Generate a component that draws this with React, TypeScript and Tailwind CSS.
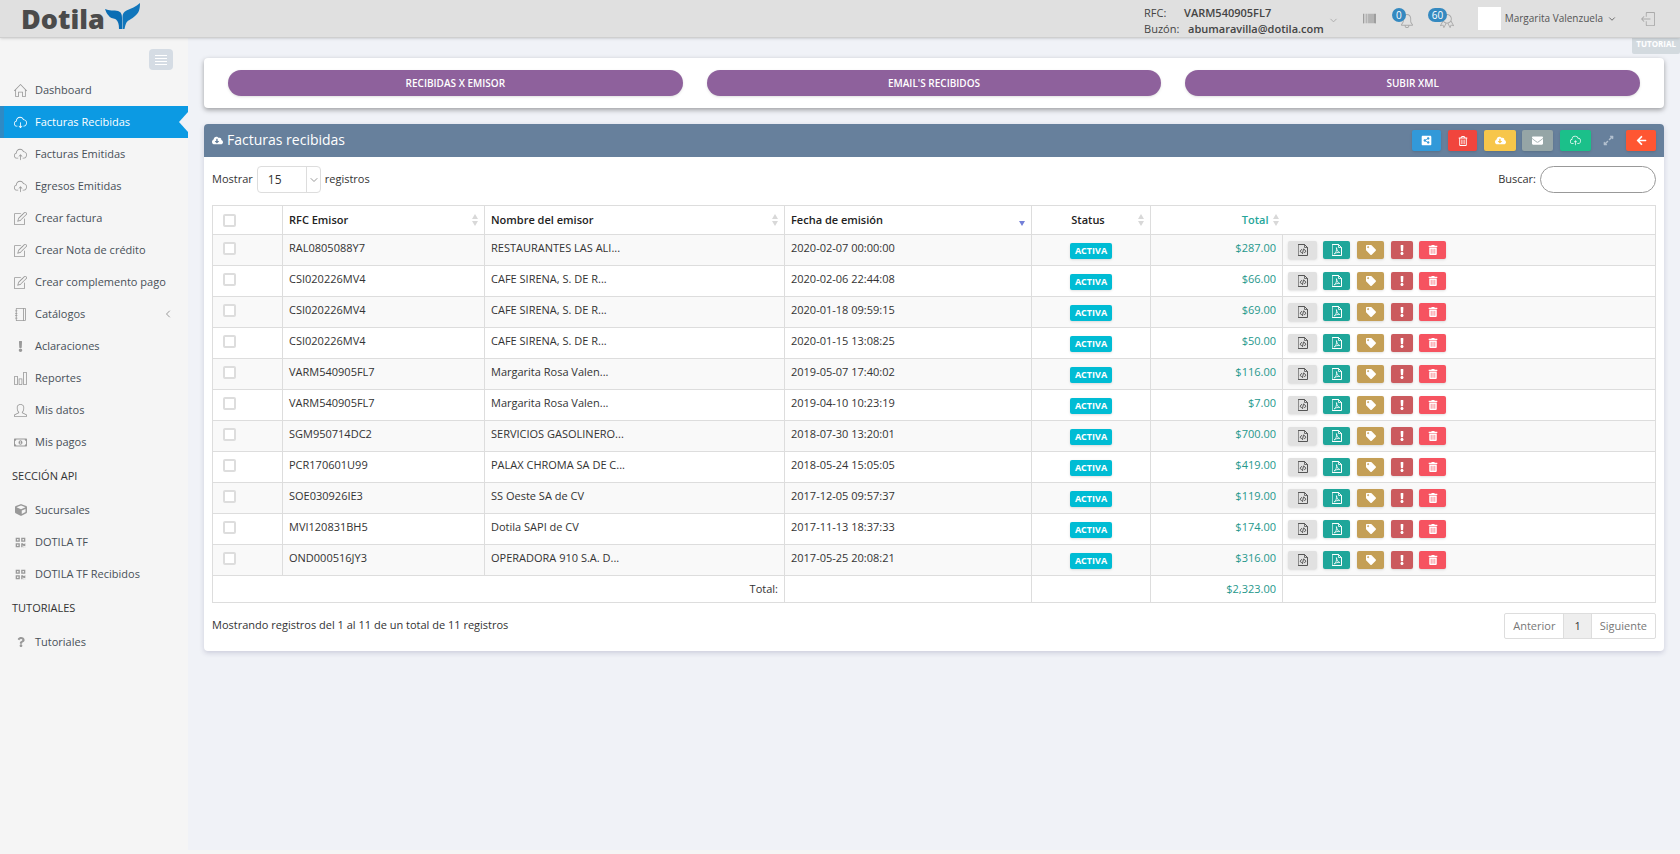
import { ReactNode } from "react";
import { FaArrowLeft, FaBarcode, FaCube, FaEnvelope, FaExclamation, FaCloudDownloadAlt, FaQrcode, FaQuestion, FaRegMoneyBillAlt, FaRegTrashAlt, FaShareAltSquare, FaTag, FaTrashAlt, FaExpandAlt } from "react-icons/fa";
import { SlBadge, SlBell, SlChart, SlCloudDownload, SlCloudUpload, SlHome, SlLogout, SlNote, SlNotebook, SlUser } from "react-icons/sl";
import { ChevronDown, ChevronLeft } from "lucide-react";

interface MenuItem {
    label: string;
    icon: ReactNode;
    active?: boolean;
    sub?: boolean;
}

interface Invoice {
    rfc: string;
    name: string;
    date: string;
    total: string;
}

const menu: MenuItem[] = [
    { label: "Dashboard", icon: <SlHome /> },
    { label: "Facturas Recibidas", icon: <SlCloudDownload />, active: true },
    { label: "Facturas Emitidas", icon: <SlCloudUpload /> },
    { label: "Egresos Emitidas", icon: <SlCloudUpload /> },
    { label: "Crear factura", icon: <SlNote /> },
    { label: "Crear Nota de crédito", icon: <SlNote /> },
    { label: "Crear complemento pago", icon: <SlNote /> },
    { label: "Catálogos", icon: <SlNotebook />, sub: true },
    { label: "Aclaraciones", icon: <FaExclamation size={11} /> },
    { label: "Reportes", icon: <SlChart /> },
    { label: "Mis datos", icon: <SlUser /> },
    { label: "Mis pagos", icon: <FaRegMoneyBillAlt /> },
];

const apiMenu: MenuItem[] = [
    { label: "Sucursales", icon: <FaCube size={12} /> },
    { label: "DOTILA TF", icon: <FaQrcode size={11} /> },
    { label: "DOTILA TF Recibidos", icon: <FaQrcode size={11} /> },
];

const tutorialMenu: MenuItem[] = [
    { label: "Tutoriales", icon: <FaQuestion size={10} /> },
];

const invoices: Invoice[] = [
    { rfc: "RAL0805088Y7", name: "RESTAURANTES LAS ALI...", date: "2020-02-07 00:00:00", total: "$287.00" },
    { rfc: "CSI020226MV4", name: "CAFE SIRENA, S. DE R...", date: "2020-02-06 22:44:08", total: "$66.00" },
    { rfc: "CSI020226MV4", name: "CAFE SIRENA, S. DE R...", date: "2020-01-18 09:59:15", total: "$69.00" },
    { rfc: "CSI020226MV4", name: "CAFE SIRENA, S. DE R...", date: "2020-01-15 13:08:25", total: "$50.00" },
    { rfc: "VARM540905FL7", name: "Margarita Rosa Valen...", date: "2019-05-07 17:40:02", total: "$116.00" },
    { rfc: "VARM540905FL7", name: "Margarita Rosa Valen...", date: "2019-04-10 10:23:19", total: "$7.00" },
    { rfc: "SGM950714DC2", name: "SERVICIOS GASOLINERO...", date: "2018-07-30 13:20:01", total: "$700.00" },
    { rfc: "PCR170601U99", name: "PALAX CHROMA SA DE C...", date: "2018-05-24 15:05:05", total: "$419.00" },
    { rfc: "SOE030926IE3", name: "SS Oeste SA de CV", date: "2017-12-05 09:57:37", total: "$119.00" },
    { rfc: "MVI120831BH5", name: "Dotila SAPI de CV", date: "2017-11-13 18:37:33", total: "$174.00" },
    { rfc: "OND000516JY3", name: "OPERADORA 910 S.A. D...", date: "2017-05-25 20:08:21", total: "$316.00" },
];

function Menu({ items }: { items: MenuItem[] }) {
    return (
        <ul>
            {items.map((item) => (
                <li key={item.label}>
                    <a
                        href="#"
                        className={
                            item.active
                                ? "relative flex h-8 items-center border-l-4 border-[#2f8ac4] bg-[#0c9ae3] pl-2.5 text-white"
                                : "flex h-8 items-center pl-3.5 text-[#485058]"
                        }
                    >
                        <span className={item.active ? "flex w-[13px] justify-center text-[13px] text-white" : "flex w-[13px] justify-center text-[13px] text-[#999999]"}>
                            {item.icon}
                        </span>
                        <span className="ml-2 whitespace-nowrap">{item.label}</span>
                        {item.sub && <ChevronLeft size={12} className="mr-3.5 ml-auto text-[#999999]" />}
                        {item.active && (
                            <svg className="absolute top-1.5 right-0" width="9" height="20" viewBox="0 0 9 20">
                                <path d="M9 0v20L0 10z" fill="#f0f2f7" />
                            </svg>
                        )}
                    </a>
                </li>
            ))}
        </ul>
    );
}

function SortIcon({ desc }: { desc?: boolean }) {
    return (
        <svg width="6" height="12" viewBox="0 0 6 12" className="shrink-0">
            {!desc && <path d="M3 0l3 5H0z" fill="#d8d8d8" />}
            <path d="M0 7h6l-3 5z" fill={desc ? "#7480d8" : "#d8d8d8"} />
        </svg>
    );
}

function FileIcon({ children }: { children: ReactNode }) {
    return (
        <svg width="10" height="12" viewBox="0 0 10 12" fill="none" stroke="currentColor" strokeLinejoin="round" strokeLinecap="round">
            <path d="M.5.5h6l3 3v8h-9z" />
            <path d="M6.5.5v3h3" strokeWidth="0.8" />
            {children}
        </svg>
    );
}

function Logo() {
    return (
        <a href="#" className="ml-[21px] flex items-center" aria-label="Dotila">
            <span className="text-[27px] leading-9 font-extrabold text-[#4b4b4b]">Dotila</span>
            <svg width="35" height="27" viewBox="0 0 35 27" className="mb-1">
                <path d="M0 6c4 2 9 1 13 2 3 1 4 3 4 7v11h-3c0-5-1-8-3-9.500C9 15 6 16 4 13 2 11 1 9 0 6z" fill="#0a6db4" />
                <path d="M35 0c0 6-1 10-5 13-3 3-7 4-8.500 6.500-1 2-1.500 4-2 6.500h-2V14c0-3 1-5 4-6.500C26 5.500 31 4 35 0z" fill="#1176bb" />
            </svg>
        </a>
    );
}

function TopBar() {
    return (
        <header className="relative z-10 flex h-[38px] items-center border-b border-[#cfcfcf] bg-[#e0e0e0] shadow-sm">
            <Logo />
            <button type="button" className="ml-auto flex items-center gap-1 pt-1 text-left leading-4">
                <span className="block text-[#444444]">
                    <span className="flex"><span className="w-10">RFC:</span><b className="font-semibold">VARM540905FL7</b></span>
                    <span className="flex"><span className="w-11">Buzón:</span><b className="font-semibold">abumaravilla@dotila.com</b></span>
                </span>
                <ChevronDown size={11} className="text-[#aaaaaa]" />
            </button>
            <button type="button" aria-label="Códigos" className="ml-6 text-[#808080]">
                <FaBarcode size={13} />
            </button>
            <button type="button" aria-label="Notificaciones" className="relative ml-6 pt-1 text-[#aaaaaa]">
                <SlBell size={14} />
                <span className="absolute -top-0.5 -left-2 min-w-3.5 rounded-full bg-[#3589c0] px-1 text-center text-[10px] leading-3.5 text-white">0</span>
            </button>
            <button type="button" aria-label="Avisos" className="relative ml-[26px] pt-1 text-[#aaaaaa]">
                <SlBadge size={14} />
                <span className="absolute -top-0.5 -left-3 rounded-full bg-[#3589c0] px-1 text-[10px] leading-3.5 text-white">60</span>
            </button>
            <span className="ml-6 size-[23px] bg-white" />
            <button type="button" className="ml-1 flex items-center gap-1 text-[10px] text-[#555555]">
                Margarita Valenzuela
                <ChevronDown size={10} />
            </button>
            <button type="button" aria-label="Salir" className="mr-[25px] ml-6 text-[#aaaaaa]">
                <SlLogout size={14} />
            </button>
        </header>
    );
}

function RowActions() {
    const base = "flex h-[18px] items-center justify-center rounded-xs shadow-sm";
    return (
        <div className="flex text-[10px] text-white">
            <button type="button" aria-label="XML" className={`${base} w-[29px] bg-[#e1e1e1] text-[#555555]`}>
                <FileIcon><path d="M3.500 5.500L2.200 7.200l1.300 1.600M6.500 5.500l1.300 1.700-1.300 1.600M5.500 5l-1 4.500" /></FileIcon>
            </button>
            <button type="button" aria-label="PDF" className={`${base} ml-1.5 w-[27px] bg-[#1fa69a]`}>
                <FileIcon><path d="M4.500 4c.5 2.500 1.500 4 3.300 4.500-2.300-.3-4 .2-5.600 1.500C4 8.500 5 6.500 4.500 4z" strokeWidth="0.8" /></FileIcon>
            </button>
            <button type="button" aria-label="Etiqueta" className={`${base} ml-[7px] w-[27px] bg-[#c49f56]`}><FaTag /></button>
            <button type="button" aria-label="Aclaración" className={`${base} ml-[7px] w-[22px] bg-[#cb5a5e]`}><FaExclamation /></button>
            <button type="button" aria-label="Eliminar" className={`${base} ml-1.5 w-[27px] bg-[#f65360]`}><FaTrashAlt /></button>
        </div>
    );
}

function InvoiceTable() {
    const cell = "border border-[#dddddd] px-1.5";
    const head = "flex items-center justify-between font-semibold";
    const check = "block size-[13px] appearance-none rounded-xs border-2 border-[#dddddd] bg-white";
    return (
        <table className="mt-3 w-full table-fixed border-collapse border border-[#dddddd]">
            <colgroup>
                <col className="w-[70px]" />
                <col />
                <col className="w-[300px]" />
                <col className="w-[247px]" />
                <col className="w-[119px]" />
                <col className="w-[132px]" />
                <col className="w-[373px]" />
            </colgroup>
            <thead>
                <tr className="h-[29px] text-left text-[#222222]">
                    <th className="border border-[#dddddd] px-2.5">
                        <input type="checkbox" aria-label="Seleccionar todo" className={check} />
                    </th>
                    <th className={cell}><div className={head}>RFC Emisor<SortIcon /></div></th>
                    <th className={cell}><div className={head}>Nombre del emisor<SortIcon /></div></th>
                    <th className={cell}><div className={head}>Fecha de emisión<SortIcon desc /></div></th>
                    <th className={cell}><div className={head}><span className="flex-1 text-center">Status</span><SortIcon /></div></th>
                    <th className="border-y border-l border-[#dddddd] px-1"><div className="flex items-center justify-end gap-1 font-semibold text-[#26a69a]">Total<SortIcon /></div></th>
                    <th className="border-y border-r border-[#dddddd]" />
                </tr>
            </thead>
            <tbody>
                {invoices.map((invoice) => (
                    <tr key={invoice.date} className="h-[31px] text-[#333333] odd:bg-[#f9f9f9]">
                        <td className="border border-[#dddddd] px-2.5 pb-1">
                            <input type="checkbox" aria-label={invoice.rfc} className={check} />
                        </td>
                        <td className={`${cell} pb-1`}>{invoice.rfc}</td>
                        <td className={`${cell} pb-1`}>{invoice.name}</td>
                        <td className={`${cell} pb-1`}>{invoice.date}</td>
                        <td className={`${cell} text-center`}>
                            <span className="inline-block rounded-xs bg-[#00bcd4] px-[5px] align-middle text-[9px] leading-4 font-bold text-white shadow-sm">ACTIVA</span>
                        </td>
                        <td className={`${cell} pb-1 text-right text-[#26988c]`}>{invoice.total}</td>
                        <td className="border border-[#dddddd] px-[5px]"><RowActions /></td>
                    </tr>
                ))}
            </tbody>
            <tfoot>
                <tr className="h-[27px] text-right text-[#333333]">
                    <td colSpan={3} className={cell}>Total:</td>
                    <td className={cell} />
                    <td className={cell} />
                    <td className={`${cell} text-[#26988c]`}>$2,323.00</td>
                    <td className={cell} />
                </tr>
            </tfoot>
        </table>
    );
}

function App() {
    const tool = "flex h-[21px] items-center justify-center rounded-xs text-[11px] text-white shadow";
    const pill = "h-[26px] rounded-full bg-[#8e619c] pt-px shadow-sm";
    return (
        <div className="flex min-h-screen flex-col bg-[#f5f5f5] font-['Open_Sans',sans-serif] text-[11px] text-[#333333]">
            <TopBar />
            <div className="flex flex-1">
                <nav className="w-[188px] shrink-0">
                    <div className="flex h-9 items-end justify-end pr-[15px] pb-1">
                        <button type="button" aria-label="Menú" className="flex h-[21px] w-6 flex-col items-center justify-center gap-0.5 rounded-sm bg-[#d5dce4]">
                            <span className="h-px w-3 bg-white" />
                            <span className="h-px w-3 bg-white" />
                            <span className="h-px w-3 bg-white" />
                            <span className="h-px w-3 bg-white" />
                        </button>
                    </div>
                    <Menu items={menu} />
                    <h3 className="flex h-9 items-center pl-3 font-normal">SECCIÓN API</h3>
                    <Menu items={apiMenu} />
                    <h3 className="flex h-9 items-center pl-3 font-normal">TUTORIALES</h3>
                    <Menu items={tutorialMenu} />
                </nav>
                <main className="relative mb-1 min-w-0 flex-1 bg-[#f0f2f7] px-4 pt-5">
                    <a href="#" className="absolute top-0 right-0 rounded-b-xs bg-[#d3dadf] px-1 pb-1 text-[8px] leading-3 font-bold text-white">TUTORIAL</a>
                    <section className="grid grid-cols-3 gap-6 rounded-sm bg-white px-6 py-3 text-[10px] font-semibold text-white shadow-[0_2px_5px_rgba(0,0,0,0.35)]">
                        <button type="button" className={pill}>RECIBIDAS X EMISOR</button>
                        <button type="button" className={pill}>EMAIL'S RECIBIDOS</button>
                        <button type="button" className={pill}>SUBIR XML</button>
                    </section>
                    <section className="mt-4 rounded-sm bg-white shadow-[0_2px_5px_rgba(60,60,110,0.2)]">
                        <div className="flex h-[33px] items-center rounded-t-sm bg-[#67809c] px-2 text-white">
                            <FaCloudDownloadAlt size={11} />
                            <h2 className="ml-1 pb-0.5 text-sm">Facturas recibidas</h2>
                            <div className="ml-auto flex items-center">
                                <button type="button" aria-label="Compartir" className={`${tool} w-[29px] bg-[#3299d9]`}><FaShareAltSquare /></button>
                                <button type="button" aria-label="Eliminar" className={`${tool} ml-[7px] w-[29px] bg-[#f1453d]`}><FaRegTrashAlt size={10} /></button>
                                <button type="button" aria-label="Descargar" className={`${tool} ml-[7px] w-8 bg-[#f7c64a]`}><FaCloudDownloadAlt /></button>
                                <button type="button" aria-label="Enviar" className={`${tool} ml-1.5 w-[31px] bg-[#95a5a6]`}><FaEnvelope /></button>
                                <button type="button" aria-label="Subir" className={`${tool} ml-[7px] w-[31px] bg-[#1bc08a]`}><SlCloudUpload /></button>
                                <button type="button" aria-label="Expandir" className="ml-3 text-[11px] text-[#b3c0cf]"><FaExpandAlt /></button>
                                <button type="button" aria-label="Regresar" className={`${tool} ml-3 w-[30px] bg-[#ff5632]`}><FaArrowLeft /></button>
                            </div>
                        </div>
                        <div className="px-2 pt-[9px] pb-3">
                            <div className="flex items-center justify-between">
                                <label className="flex items-center">
                                    Mostrar
                                    <span className="relative mx-1">
                                        <select className="h-[27px] w-16 appearance-none rounded-sm border border-[#dddddd] bg-white pl-2.5 text-xs">
                                            <option>15</option>
                                        </select>
                                        <span className="pointer-events-none absolute inset-y-0 right-0 flex w-[15px] items-center justify-center border-l border-[#dddddd] text-[#999999]">
                                            <ChevronDown size={12} />
                                        </span>
                                    </span>
                                    registros
                                </label>
                                <label className="flex items-center gap-1">
                                    Buscar:
                                    <input type="search" className="h-[27px] w-[116px] rounded-full border border-[#999999] px-3" />
                                </label>
                            </div>
                            <InvoiceTable />
                            <div className="mt-2.5 flex items-start justify-between">
                                <p className="pt-1 leading-4">Mostrando registros del 1 al 11 de un total de 11 registros</p>
                                <div className="flex h-[26px] rounded-xs border border-[#dddddd] text-[#777777]">
                                    <button type="button" className="px-2">Anterior</button>
                                    <button type="button" className="border-x border-[#dddddd] bg-[#eeeeee] px-2.5 text-[#333333]">1</button>
                                    <button type="button" className="px-2">Siguiente</button>
                                </div>
                            </div>
                        </div>
                    </section>
                </main>
            </div>
        </div>
    );
}

export default App;
